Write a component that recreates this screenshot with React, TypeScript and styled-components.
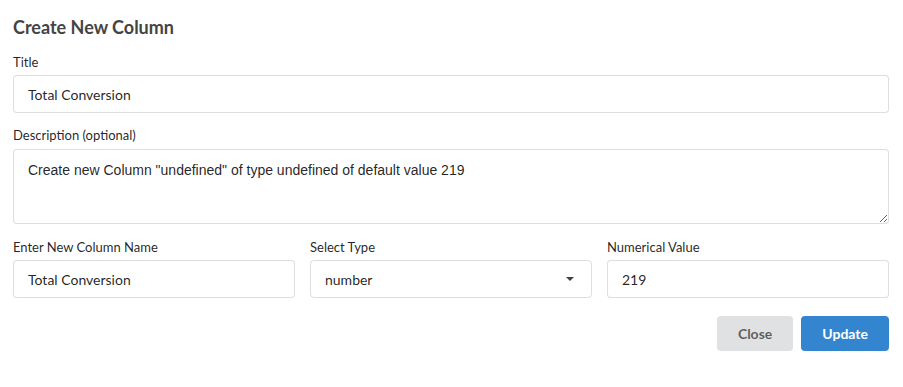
import { FC } from "react";
import styled, { createGlobalStyle } from "styled-components";

const GlobalStyle = createGlobalStyle`
  * { box-sizing: border-box; }
  body {
    margin: 0;
    background: #fff;
    font-family: Lato, "Helvetica Neue", Arial, sans-serif;
    color: rgba(0, 0, 0, 0.87);
  }
`;

const App: FC = () => {
  return (
    <>
      <GlobalStyle />
      <Modal>
        <Header>Create New Column</Header>
        <FormBody>
          <Field>
            <Label>Title</Label>
            <Input type="text" defaultValue="Total Conversion" />
          </Field>
          <Field>
            <Label>Description (optional)</Label>
            <TextArea
              defaultValue={`Create new Column "undefined" of type undefined of default value 219`}
            />
          </Field>
          <FieldRow>
            <Field>
              <Label>Enter New Column Name</Label>
              <Input type="text" defaultValue="Total Conversion" />
            </Field>
            <Field>
              <Label>Select Type</Label>
              <SelectBox>
                <span>number</span>
                <Caret />
              </SelectBox>
            </Field>
            <Field>
              <Label>Numerical Value</Label>
              <Input type="text" defaultValue="219" />
            </Field>
          </FieldRow>
        </FormBody>
        <Actions>
          <Button>Close</Button>
          <Button primary>Update</Button>
        </Actions>
      </Modal>
    </>
  );
};

export default App;

const Modal = styled.div`
  width: 903px;
  height: 387px;
  padding: 16px 14px 0 13px;
`;

const Header = styled.h2`
  margin: 0;
  font-size: 18px;
  line-height: 22px;
  font-weight: 700;
  color: #444;
`;

const FormBody = styled.div`
  display: flex;
  flex-direction: column;
  gap: 13px;
  margin-top: 15px;
`;

const Field = styled.div`
  display: flex;
  flex-direction: column;
  min-width: 0;
`;

const FieldRow = styled.div`
  display: grid;
  grid-template-columns: 1fr 1fr 1fr;
  gap: 15px;
  margin-top: 1px;
`;

const Label = styled.label`
  font-size: 13px;
  line-height: 18px;
  color: rgba(0, 0, 0, 0.87);
  margin-bottom: 4px;
`;

const Input = styled.input`
  width: 100%;
  height: 38px;
  padding: 0 14px;
  font-family: Lato, sans-serif;
  font-size: 14px;
  color: rgba(0, 0, 0, 0.87);
  border: 1px solid rgba(34, 36, 38, 0.15);
  border-radius: 4px;
  outline: none;
  background: #fff;
`;

const TextArea = styled.textarea`
  width: 100%;
  height: 75px;
  padding: 11px 14px;
  font-family: "Liberation Sans", Arial, sans-serif;
  font-size: 14px;
  line-height: 18px;
  color: rgba(0, 0, 0, 0.87);
  border: 1px solid rgba(34, 36, 38, 0.15);
  border-radius: 4px;
  outline: none;
  resize: vertical;
  margin-top: 1px;
`;

const SelectBox = styled.div`
  height: 38px;
  display: flex;
  align-items: center;
  justify-content: space-between;
  padding: 0 14px;
  font-size: 14px;
  color: rgba(0, 0, 0, 0.87);
  border: 1px solid rgba(34, 36, 38, 0.15);
  border-radius: 4px;
`;

const Caret = styled.span`
  width: 0;
  height: 0;
  border-left: 4px solid transparent;
  border-right: 4px solid transparent;
  border-top: 4px solid rgba(0, 0, 0, 0.75);
  margin-right: 3px;
`;

const Actions = styled.div`
  display: flex;
  justify-content: flex-end;
  gap: 8px;
  margin-top: 18px;
`;

const Button = styled.button<{ primary?: boolean }>`
  height: 35px;
  padding: 0 21px;
  font-family: Lato, sans-serif;
  font-size: 14px;
  font-weight: 700;
  border: none;
  border-radius: 4px;
  cursor: pointer;
  background: ${({ primary }) => (primary ? "#3385d0" : "#e0e1e2")};
  color: ${({ primary }) => (primary ? "#fff" : "rgba(0, 0, 0, 0.6)")};
`;
